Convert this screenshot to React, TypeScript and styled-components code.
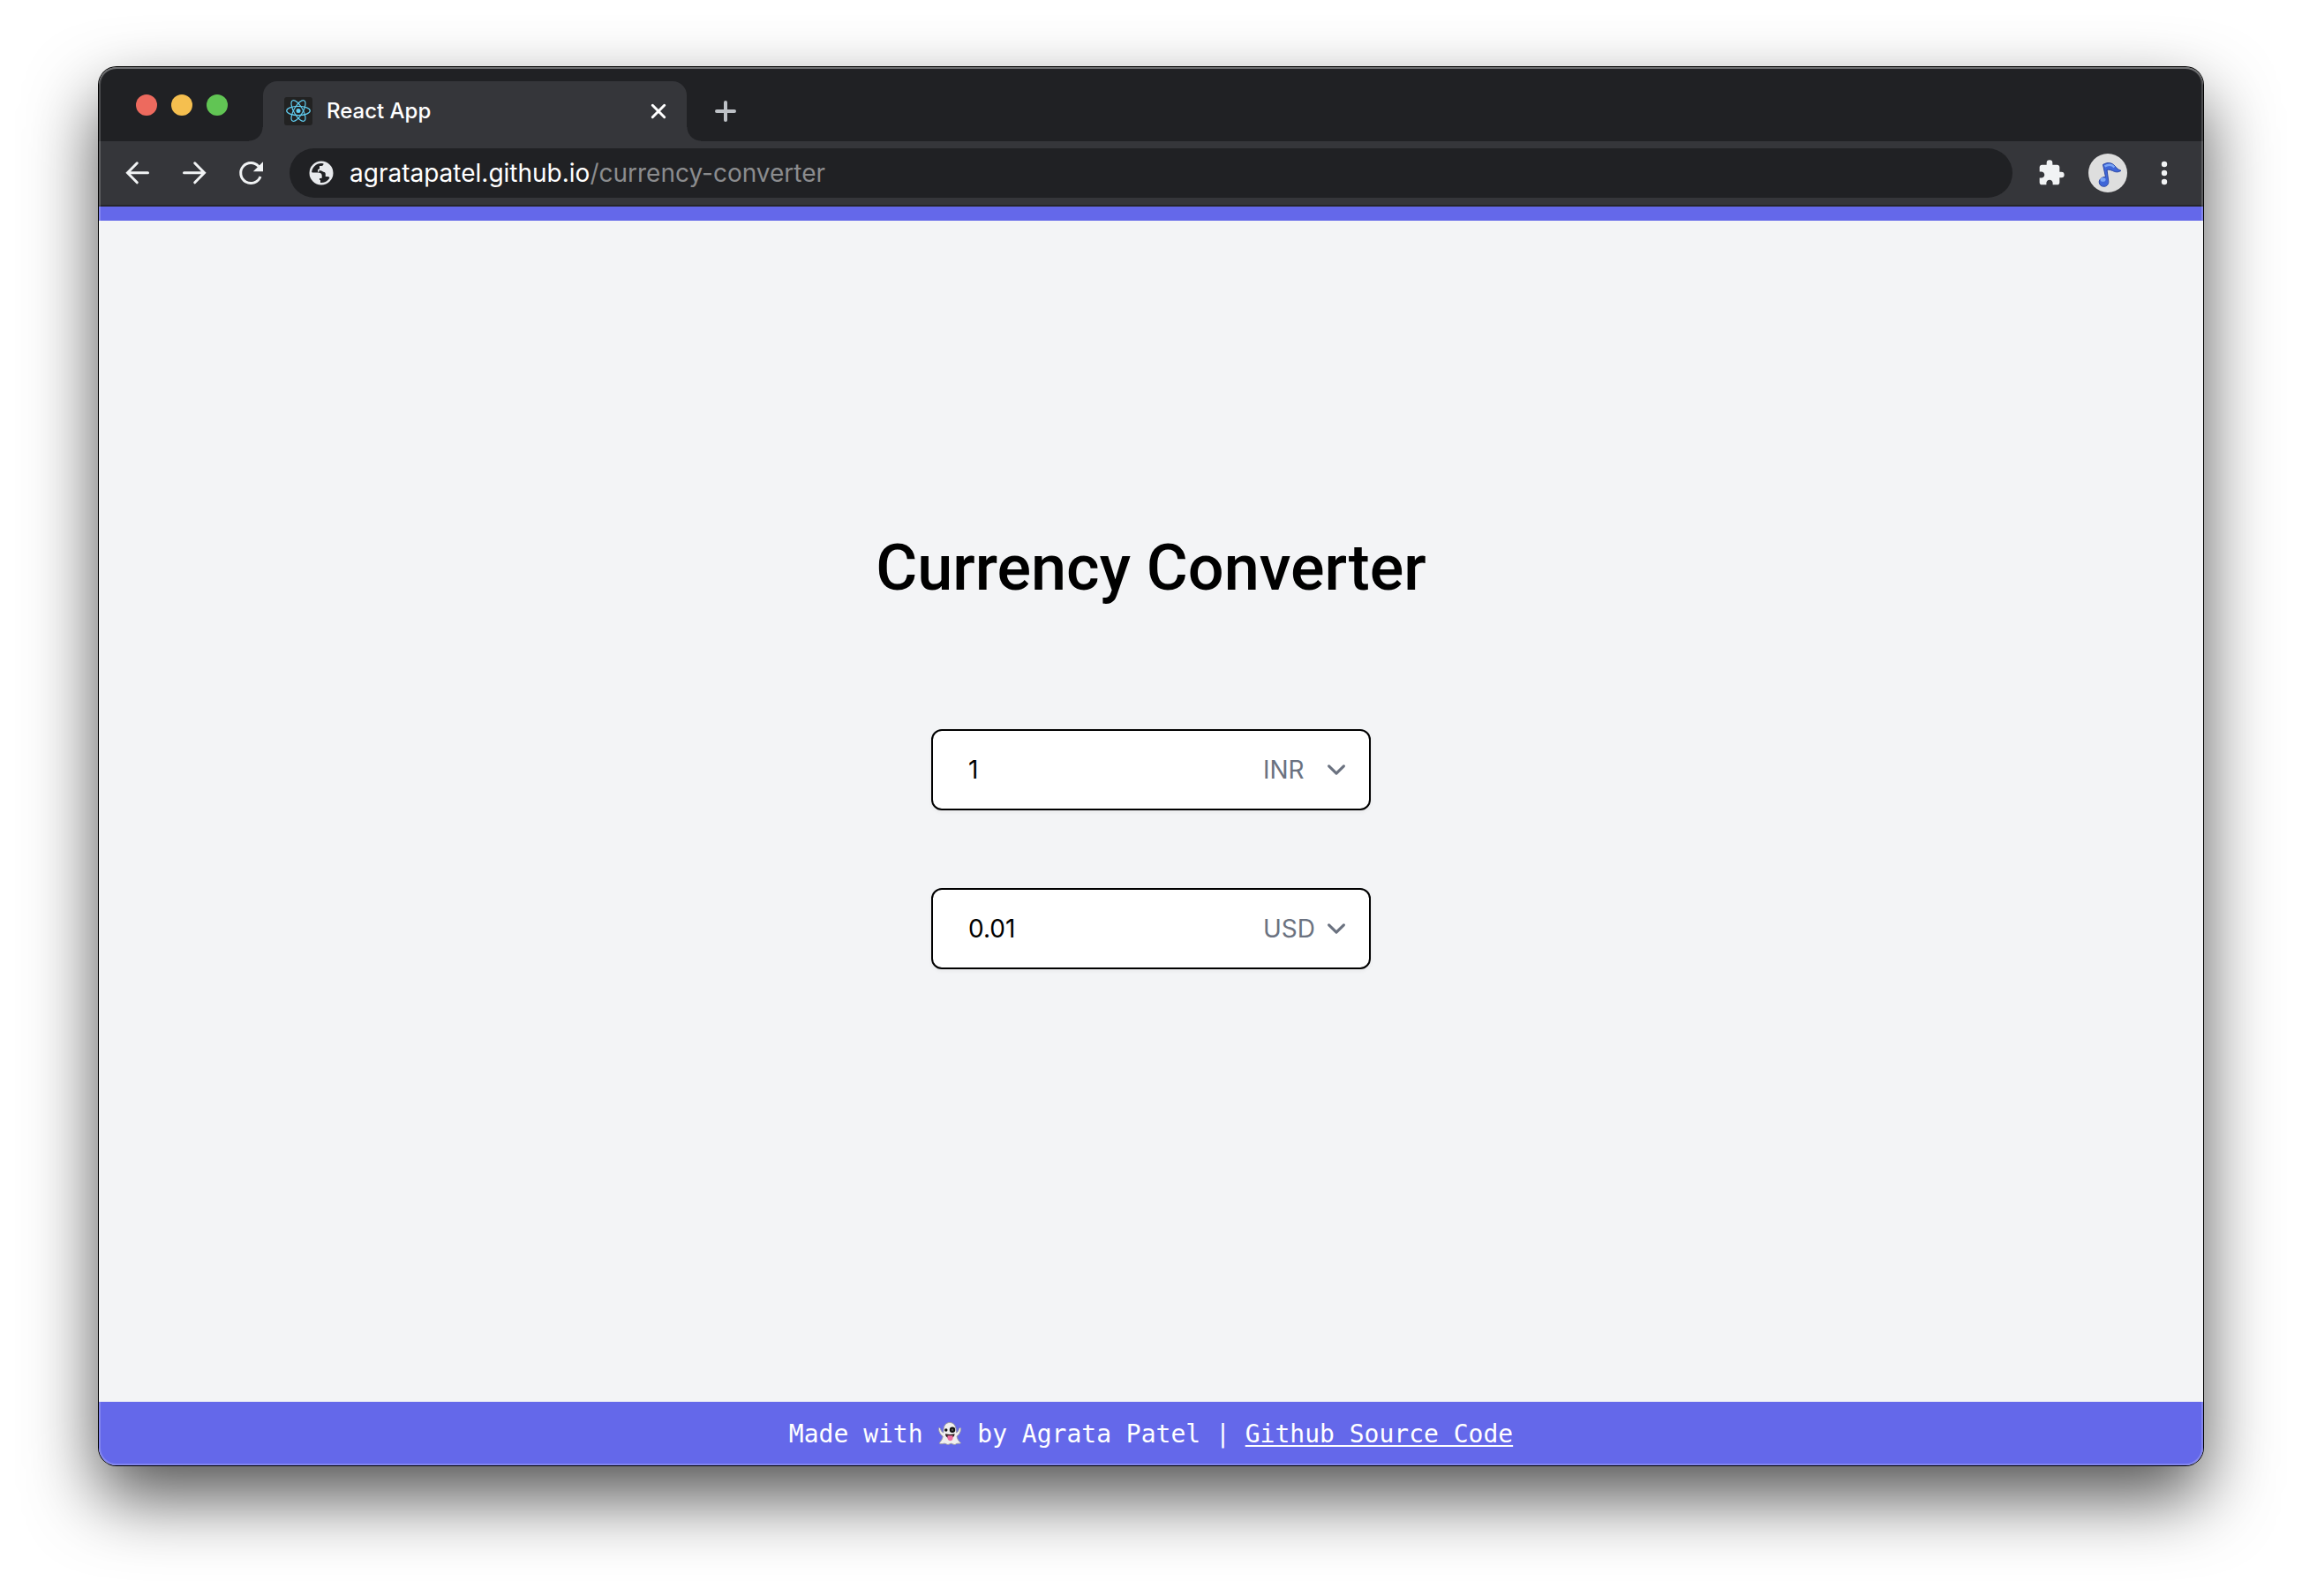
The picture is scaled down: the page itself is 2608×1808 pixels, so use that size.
import React, { useState } from 'react';
import styled, { createGlobalStyle } from 'styled-components';
import { MdExtension } from 'react-icons/md';

const sans = `Inter, "Liberation Sans", sans-serif`;
const display = `Roboto, "Liberation Sans", sans-serif`;
const mono = `"DejaVu Sans Mono", "Liberation Mono", monospace`;

const GlobalStyle = createGlobalStyle`
  *, *::before, *::after { box-sizing: border-box; }
  body { margin: 0; background: #fff; font-family: ${sans}; }
  button, input, select { font: inherit; color: inherit; margin: 0; padding: 0; border: 0; background: none; }
  button { cursor: pointer; }
  svg { display: block; }
`;

const Desktop = styled.div`
  display: flex;
  min-height: 100vh;
  padding: 76px 112px 148px;
`;

const BrowserWindow = styled.div`
  position: relative;
  flex: 1;
  display: flex;
  flex-direction: column;
  border-radius: 20px;
  overflow: hidden;
  background: #f3f4f6;
  box-shadow: 0 0 0 1px #000, 0 36px 80px rgba(0, 0, 0, 0.68);

  &::after {
    content: '';
    position: absolute;
    inset: 0;
    border-radius: inherit;
    pointer-events: none;
    box-shadow: inset 0 0 0 2px rgba(255, 255, 255, 0.2), inset 0 2px 0 rgba(255, 255, 255, 0.2);
  }
`;

const TabStrip = styled.header`
  display: flex;
  height: 84px;
  padding: 16px 42px 0;
  background: #202124;
`;

const TrafficLights = styled.div`
  display: flex;
  gap: 16px;
  margin: 15px 40px 0 0;
`;

const Light = styled.button<{ $color: string }>`
  width: 24px;
  height: 24px;
  border-radius: 50%;
  background: ${(p) => p.$color};
`;

const Tab = styled.div`
  position: relative;
  display: flex;
  align-items: center;
  gap: 16px;
  width: 480px;
  padding: 0 16px 0 24px;
  border-radius: 16px 16px 0 0;
  background: #35363a;
  color: #fff;

  &::before,
  &::after {
    content: '';
    position: absolute;
    bottom: 0;
    width: 16px;
    height: 16px;
  }
  &::before {
    right: 100%;
    background: radial-gradient(circle at 0 0, transparent 15px, #35363a 16px);
  }
  &::after {
    left: 100%;
    background: radial-gradient(circle at 100% 0, transparent 15px, #35363a 16px);
  }
`;

const TabTitle = styled.span`
  flex: 1;
  font-size: 24px;
  line-height: 32px;
  font-weight: 500;
`;

const IconButton = styled.button<{ $color?: string }>`
  display: grid;
  place-items: center;
  width: 32px;
  height: 32px;
  color: ${(p) => p.$color ?? '#f1f3f4'};
`;

const NewTab = styled.div`
  display: flex;
  align-items: center;
  margin-left: 28px;
`;

const Toolbar = styled.nav`
  display: flex;
  align-items: center;
  height: 74px;
  padding: 0 28px;
  border-bottom: 2px solid #25262a;
  background: #35363a;
`;

const NavButtons = styled.div`
  display: flex;
  gap: 32px;
`;

const AddressBar = styled.div`
  flex: 1;
  display: flex;
  align-items: center;
  gap: 16px;
  height: 56px;
  margin: 0 28px;
  padding: 0 20px;
  border-radius: 28px;
  background: #202124;
  color: #fff;
`;

const Url = styled.div`
  flex: 1;
  outline: none;
  font-size: 28px;
  line-height: 36px;
`;

const UrlPath = styled.span`
  color: #8b8c8e;
`;

const Actions = styled.div`
  display: flex;
  align-items: center;
  gap: 26px;
`;

const Avatar = styled.button`
  display: grid;
  place-items: center;
  width: 44px;
  height: 44px;
  border-radius: 50%;
  background: #dedede;
`;

const Page = styled.main`
  flex: 1;
  display: flex;
  flex-direction: column;
  align-items: center;
  padding: 348px 32px 64px;
  border-top: 16px solid #6468ea;
`;

const Title = styled.h1`
  margin: 0 0 136px;
  color: #000;
  font-family: ${display};
  font-size: 72px;
  line-height: 92px;
  font-weight: 500;
`;

const Form = styled.form`
  display: flex;
  flex-direction: column;
  gap: 88px;
  width: 498px;
  max-width: 100%;
`;

const Field = styled.div`
  display: flex;
  height: 92px;
  padding-left: 40px;
  border: 2px solid #000;
  border-radius: 12px;
  background: #fff;
  box-shadow: 0 2px 4px rgba(0, 0, 0, 0.05);
  font-size: 28px;
  line-height: 40px;
`;

const Amount = styled.input`
  flex: 1;
  min-width: 0;
  outline: none;
  color: #000;
`;

const Picker = styled.div`
  display: grid;
  width: 120px;
  align-items: center;
  color: #6b7280;

  > * { grid-area: 1 / 1; }
  > svg { justify-self: end; margin-right: 16px; pointer-events: none; }
`;

const CurrencySelect = styled.select`
  width: 100%;
  height: 100%;
  appearance: none;
  outline: none;
`;

const Footer = styled.footer`
  display: flex;
  align-items: center;
  justify-content: center;
  height: 72px;
  padding-top: 2px;
  background: #6468ea;
  color: #fff;
  font-family: ${mono};
  font-size: 28px;
  line-height: 40px;
  white-space: pre;
`;

const SourceLink = styled.a`
  color: inherit;
  text-decoration: underline;
  text-decoration-thickness: 2px;
  text-underline-offset: 3px;
`;

const ReactLogo = () => (
  <svg width="32" height="32" viewBox="0 0 32 32" aria-hidden="true">
    <rect width="32" height="32" rx="3" fill="#222" />
    <g fill="none" stroke="#61cdf0" strokeWidth="1.2">
      <ellipse cx="16" cy="15.5" rx="13.3" ry="5.1" />
      <ellipse cx="16" cy="15.5" rx="13.3" ry="5.1" transform="rotate(60 16 15.5)" />
      <ellipse cx="16" cy="15.5" rx="13.3" ry="5.1" transform="rotate(120 16 15.5)" />
    </g>
    <circle cx="16" cy="15.5" r="2.5" fill="#61cdf0" />
  </svg>
);

const CloseIcon = () => (
  <svg width="20" height="20" viewBox="0 0 20 20" stroke="currentColor" strokeWidth="3" strokeLinecap="round">
    <path d="M3.3 3.3l13.4 13.4M16.7 3.3L3.3 16.7" />
  </svg>
);

const PlusIcon = () => (
  <svg width="24" height="24" viewBox="0 0 24 24" stroke="currentColor" strokeWidth="4" strokeLinecap="round">
    <path d="M12 2v20M2 12h20" />
  </svg>
);

const BackIcon = ({ flip = false }: { flip?: boolean }) => (
  <svg width="32" height="32" viewBox="0 0 32 32" fill="none" stroke="currentColor" strokeWidth="3" strokeLinecap="round">
    <path
      transform={flip ? 'translate(32 0) scale(-1 1)' : undefined}
      d="M27.5 15.8H5M15.3 4.8L4.5 15.8l10.8 11"
    />
  </svg>
);

const ReloadIcon = () => (
  <svg width="32" height="32" viewBox="0 0 32 32">
    <path d="M25 8.6A11.5 11.5 0 1 0 27 20" fill="none" stroke="currentColor" strokeWidth="3" />
    <path d="M30 3.2V14.3H18.8z" fill="currentColor" />
  </svg>
);

const MoreIcon = () => (
  <svg width="32" height="32" viewBox="0 0 32 32" fill="currentColor">
    <circle cx="16" cy="6" r="3.2" />
    <circle cx="16" cy="16" r="3.2" />
    <circle cx="16" cy="26" r="3.2" />
  </svg>
);

const GlobeIcon = () => (
  <svg width="32" height="32" viewBox="0 0 32 32" aria-hidden="true">
    <circle cx="16" cy="16" r="12.2" fill="none" stroke="#e8eaed" strokeWidth="2.6" />
    <path
      d="M18.500 4v1.500c0 1.500-.8 2.500-2.300 2.500H14v2.800c0 1-1 1.400-2 1.400v2.500h6.500c1.500 0 2.500 1 2.500 2.300V20h2c1.800 0 2.800 1 3 2.500 2-2.500 2.800-5 2.500-8C27.500 9 24 5 18.500 4zM4 14.500c-.5 6.500 4 12.500 11 13.500v-4c-2 0-3-1.200-3-3v-1.300z"
      fill="#e8eaed"
    />
    <path d="M4 15.500h9c2.300 0 3.700 1.500 3.700 3.500v3H14v5H9l-5-6z" fill="#e8eaed" />
    <path d="M12 12.200h6.500c1.500 0 2.500 1 2.500 2.300V20" fill="none" stroke="#e8eaed" strokeWidth="0.500" />
    <path d="M13.500 14.300c3 .2 5 1.700 5 4.700v4h-3" fill="none" stroke="#202124" strokeWidth="2.400" />
  </svg>
);

const NoteIcon = () => (
  <svg width="44" height="44" viewBox="0 0 44 44" aria-hidden="true">
    <path
      d="M16.500 12.500c5-3 10-2.500 13.500 1.500 2 2.500 4 4.500 7 5.300-3.500 2.500-7 1.500-9.500.2-2-1-4.500-1.500-6.500-1.200l1.800 13c.3 3.500-2 6-5.200 6-3.400 0-5.400-2.300-5.400-5.200 0-3.300 3.600-5.900 7.300-5.600z"
      fill="#3f66d8"
      stroke="#2b47a5"
      strokeWidth="1"
    />
    <path d="M18.500 14.500c4-2.500 8-2.200 11 .8" stroke="#7ba5f5" strokeWidth="2.500" fill="none" />
    <ellipse cx="16.500" cy="29.500" rx="3" ry="2.300" fill="#7ba5f5" />
  </svg>
);

const GhostIcon = () => (
  <svg width="28" height="30" viewBox="1 1 28 30" role="img" aria-label="ghost">
    <path
      d="M15 2.500c-4.500 0-6.800 3.500-7 8.500l-.2 3C6 13.500 5 11.500 4.500 9.500 4 8 2 8.200 2.400 10c.6 4 2.400 6.500 4.800 8C7 21 5 23.500 3 26c2 1.500 4.500.2 6 .2 2 0 2.500 1.300 4 1.300s2-1.300 3.500-1.300 2 1.300 3.700 1.300 2-1.300 3.800-1.300c1.200 0 2.500.3 3.500-.5-2.500-2.200-4-4.700-4.500-7.700 2.500-1.500 4-4 4.700-8 .3-1.800-1.700-2-2.200-.5-.5 2-1.300 3.700-3 4.500L22.200 11c-.4-5-2.700-8.500-7.200-8.500z"
      fill="#f0efef"
      stroke="#9d9da5"
      strokeWidth="1"
    />
    <circle cx="18" cy="10.700" r="3.200" fill="#111" />
    <circle cx="18" cy="10.700" r="1.200" fill="#555" />
    <circle cx="10.800" cy="11" r="1.700" fill="#111" />
    <path d="M10 15.300c3.500 1 7 1 10.500 0 0 3.500-2.500 5-5.200 5S10 18.500 10 15.300z" fill="#2a1a1e" />
    <path d="M12.500 17.300h6v3c0 4-5.500 4-6 0z" fill="#f06fa0" />
  </svg>
);

const ChevronIcon = () => (
  <svg width="42" height="42" viewBox="0 0 20 20" fill="none" stroke="currentColor" strokeWidth="1.500" strokeLinecap="round" strokeLinejoin="round">
    <path d="M6 8l4 4 4-4" />
  </svg>
);

const currencies = ['INR', 'USD', 'EUR', 'GBP'];

type MoneyFieldProps = { name: string; amount: string; currency: string };

function MoneyField({ name, amount, currency }: MoneyFieldProps) {
  const [value, setValue] = useState(amount);
  const [code, setCode] = useState(currency);
  return (
    <Field>
      <Amount aria-label={`${name} amount`} value={value} onChange={(e) => setValue(e.target.value)} />
      <Picker>
        <CurrencySelect aria-label={`${name} currency`} value={code} onChange={(e) => setCode(e.target.value)}>
          {currencies.map((c) => (
            <option key={c}>{c}</option>
          ))}
        </CurrencySelect>
        <ChevronIcon />
      </Picker>
    </Field>
  );
}

export default function App() {
  return (
    <>
      <GlobalStyle />
      <Desktop>
        <BrowserWindow>
          <TabStrip>
            <TrafficLights>
              <Light $color="#ed6a5e" aria-label="Close window" />
              <Light $color="#f5bf4f" aria-label="Minimize window" />
              <Light $color="#61c554" aria-label="Zoom window" />
            </TrafficLights>
            <Tab>
              <ReactLogo />
              <TabTitle>React App</TabTitle>
              <IconButton $color="#fff" aria-label="Close tab">
                <CloseIcon />
              </IconButton>
            </Tab>
            <NewTab>
              <IconButton $color="#bdc1c6" aria-label="New tab">
                <PlusIcon />
              </IconButton>
            </NewTab>
          </TabStrip>
          <Toolbar>
            <NavButtons>
              <IconButton aria-label="Back"><BackIcon /></IconButton>
              <IconButton aria-label="Forward"><BackIcon flip /></IconButton>
              <IconButton aria-label="Reload"><ReloadIcon /></IconButton>
            </NavButtons>
            <AddressBar>
              <GlobeIcon />
              <Url role="textbox" aria-label="Address" contentEditable suppressContentEditableWarning spellCheck={false}>
                agratapatel.github.io<UrlPath>/currency-converter</UrlPath>
              </Url>
            </AddressBar>
            <Actions>
              <IconButton aria-label="Extensions"><MdExtension size={32} /></IconButton>
              <Avatar aria-label="Profile"><NoteIcon /></Avatar>
              <IconButton aria-label="Menu"><MoreIcon /></IconButton>
            </Actions>
          </Toolbar>
          <Page>
            <Title>Currency Converter</Title>
            <Form>
              <MoneyField name="From" amount="1" currency="INR" />
              <MoneyField name="To" amount="0.01" currency="USD" />
            </Form>
          </Page>
          <Footer>
            <span>Made with </span>
            <GhostIcon />
            <span> by Agrata Patel | </span>
            <SourceLink href="https://github.com/agratapatel/currency-converter">Github Source Code</SourceLink>
          </Footer>
        </BrowserWindow>
      </Desktop>
    </>
  );
}
